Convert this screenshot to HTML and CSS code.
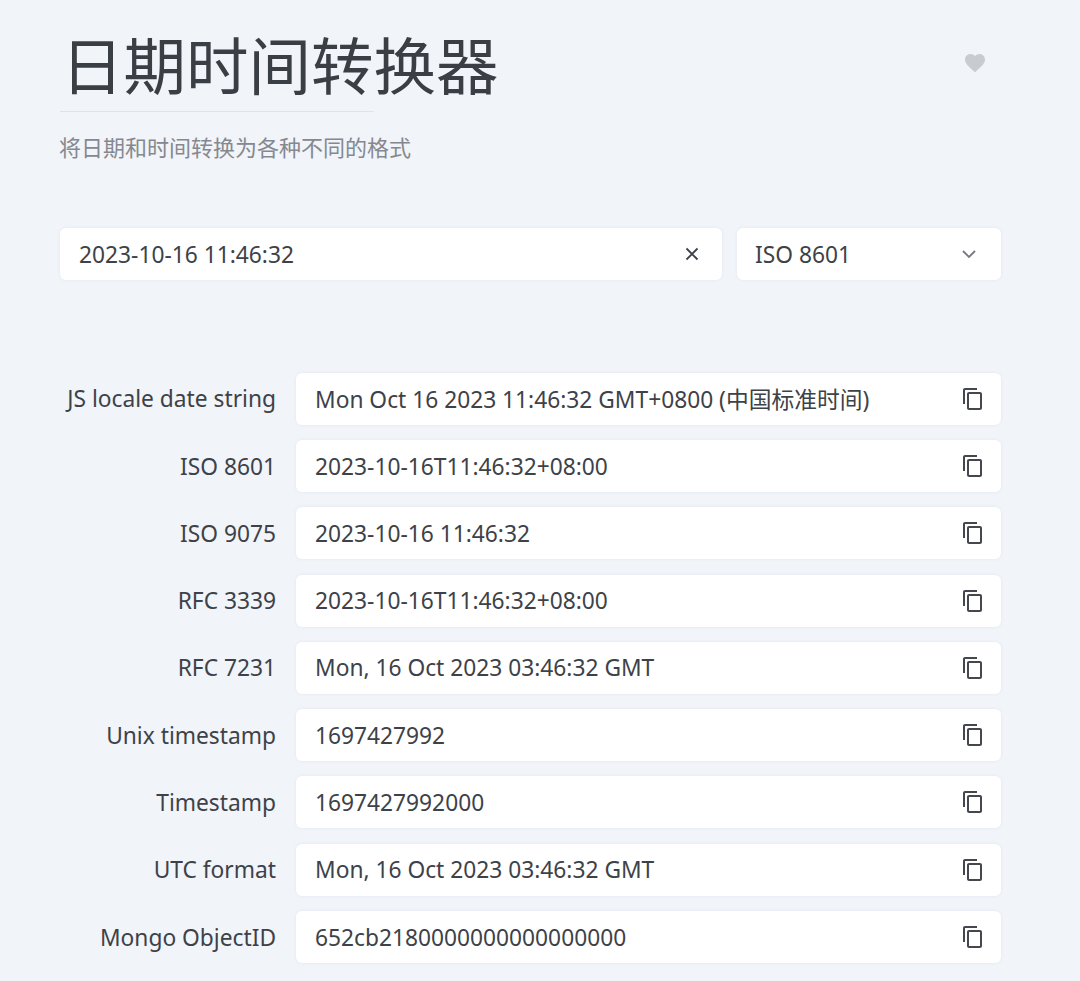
FILE: index.html
```html
<!DOCTYPE html>
<html lang="en">
<head>
    <meta charset="UTF-8">
    <title>日期时间转换器</title>
    <link rel="stylesheet" href="styles.css">
</head>
<body>
<div class="page">
    <div class="head">
        <div class="head-text">
            <h1 class="title">日期时间转换器</h1>
            <div class="separator"></div>
            <div class="desc">将日期和时间转换为各种不同的格式</div>
        </div>
        <svg class="heart" viewBox="0 0 24 24"><path d="M12 21.35l-1.45-1.32C5.4 15.36 2 12.28 2 8.5 2 5.42 4.42 3 7.5 3c1.74 0 3.41.81 4.5 2.09C13.09 3.81 14.76 3 16.5 3 19.58 3 22 5.42 22 8.5c0 3.78-3.4 6.86-8.55 11.54L12 21.35z"/></svg>
    </div>

    <div class="controls">
        <div class="box box-input">
            <span class="value">2023-10-16 11:46:32</span>
            <svg class="icon-close" viewBox="0 0 24 24"><path d="M6 6l12 12M18 6L6 18"/></svg>
        </div>
        <div class="box box-select">
            <span class="value">ISO 8601</span>
            <svg class="icon-chevron" viewBox="0 0 24 24"><path d="M6 9l6 6 6-6"/></svg>
        </div>
    </div>

    <div class="rows">
        <div class="row">
            <label class="label">JS locale date string</label>
            <div class="box box-output"><span class="value">Mon Oct 16 2023 11:46:32 GMT+0800 (中国标准时间)</span><svg class="icon-copy" viewBox="0 0 24 24"><path d="M16 1H4c-1.1 0-2 .9-2 2v14h2V3h12V1zm3 4H8c-1.1 0-2 .9-2 2v14c0 1.1.9 2 2 2h11c1.1 0 2-.9 2-2V7c0-1.1-.9-2-2-2zm0 16H8V7h11v14z"/></svg></div>
        </div>
        <div class="row">
            <label class="label">ISO 8601</label>
            <div class="box box-output"><span class="value">2023-10-16T11:46:32+08:00</span><svg class="icon-copy" viewBox="0 0 24 24"><path d="M16 1H4c-1.1 0-2 .9-2 2v14h2V3h12V1zm3 4H8c-1.1 0-2 .9-2 2v14c0 1.1.9 2 2 2h11c1.1 0 2-.9 2-2V7c0-1.1-.9-2-2-2zm0 16H8V7h11v14z"/></svg></div>
        </div>
        <div class="row">
            <label class="label">ISO 9075</label>
            <div class="box box-output"><span class="value">2023-10-16 11:46:32</span><svg class="icon-copy" viewBox="0 0 24 24"><path d="M16 1H4c-1.1 0-2 .9-2 2v14h2V3h12V1zm3 4H8c-1.1 0-2 .9-2 2v14c0 1.1.9 2 2 2h11c1.1 0 2-.9 2-2V7c0-1.1-.9-2-2-2zm0 16H8V7h11v14z"/></svg></div>
        </div>
        <div class="row">
            <label class="label">RFC 3339</label>
            <div class="box box-output"><span class="value">2023-10-16T11:46:32+08:00</span><svg class="icon-copy" viewBox="0 0 24 24"><path d="M16 1H4c-1.1 0-2 .9-2 2v14h2V3h12V1zm3 4H8c-1.1 0-2 .9-2 2v14c0 1.1.9 2 2 2h11c1.1 0 2-.9 2-2V7c0-1.1-.9-2-2-2zm0 16H8V7h11v14z"/></svg></div>
        </div>
        <div class="row">
            <label class="label">RFC 7231</label>
            <div class="box box-output"><span class="value">Mon, 16 Oct 2023 03:46:32 GMT</span><svg class="icon-copy" viewBox="0 0 24 24"><path d="M16 1H4c-1.1 0-2 .9-2 2v14h2V3h12V1zm3 4H8c-1.1 0-2 .9-2 2v14c0 1.1.9 2 2 2h11c1.1 0 2-.9 2-2V7c0-1.1-.9-2-2-2zm0 16H8V7h11v14z"/></svg></div>
        </div>
        <div class="row">
            <label class="label">Unix timestamp</label>
            <div class="box box-output"><span class="value">1697427992</span><svg class="icon-copy" viewBox="0 0 24 24"><path d="M16 1H4c-1.1 0-2 .9-2 2v14h2V3h12V1zm3 4H8c-1.1 0-2 .9-2 2v14c0 1.1.9 2 2 2h11c1.1 0 2-.9 2-2V7c0-1.1-.9-2-2-2zm0 16H8V7h11v14z"/></svg></div>
        </div>
        <div class="row">
            <label class="label">Timestamp</label>
            <div class="box box-output"><span class="value">1697427992000</span><svg class="icon-copy" viewBox="0 0 24 24"><path d="M16 1H4c-1.1 0-2 .9-2 2v14h2V3h12V1zm3 4H8c-1.1 0-2 .9-2 2v14c0 1.1.9 2 2 2h11c1.1 0 2-.9 2-2V7c0-1.1-.9-2-2-2zm0 16H8V7h11v14z"/></svg></div>
        </div>
        <div class="row">
            <label class="label">UTC format</label>
            <div class="box box-output"><span class="value">Mon, 16 Oct 2023 03:46:32 GMT</span><svg class="icon-copy" viewBox="0 0 24 24"><path d="M16 1H4c-1.1 0-2 .9-2 2v14h2V3h12V1zm3 4H8c-1.1 0-2 .9-2 2v14c0 1.1.9 2 2 2h11c1.1 0 2-.9 2-2V7c0-1.1-.9-2-2-2zm0 16H8V7h11v14z"/></svg></div>
        </div>
        <div class="row">
            <label class="label">Mongo ObjectID</label>
            <div class="box box-output"><span class="value">652cb2180000000000000000</span><svg class="icon-copy" viewBox="0 0 24 24"><path d="M16 1H4c-1.1 0-2 .9-2 2v14h2V3h12V1zm3 4H8c-1.1 0-2 .9-2 2v14c0 1.1.9 2 2 2h11c1.1 0 2-.9 2-2V7c0-1.1-.9-2-2-2zm0 16H8V7h11v14z"/></svg></div>
        </div>
    </div>
</div>
</body>
</html>
```

FILE: styles.css
```css
html, body{
    margin: 0;
    height: 100%;
    overflow: hidden;
}
body{
    background: #f1f4f9;
    color: #3d4248;
    font-family: "Noto Sans", "Noto Sans CJK SC", sans-serif;
    font-size: 22.75px;
}
.page{
    padding: 0 79px 0 60px;
}
.head{
    display: flex;
    justify-content: space-between;
}
.title{
    margin: 0;
    padding: 23px 0 0 1px;
    height: 88px;
    font-family: "Noto Sans CJK SC", sans-serif;
    font-size: 62.5px;
    line-height: 80px;
    font-weight: 400;
    color: #3a3f45;
}
.separator{
    width: 314px;
    height: 1px;
    background: #dfe3ea;
}
.desc{
    margin: 17px 0 0 -1px;
    font-family: "Noto Sans CJK SC", sans-serif;
    font-size: 22px;
    line-height: 34px;
    color: #85898f;
}
.heart{
    width: 24px;
    height: 24px;
    margin: 51px 14px 0 0;
    fill: #c9cbd0;
}
.controls{
    display: flex;
    gap: 15px;
    margin-top: 65px;
}
.box{
    display: flex;
    align-items: center;
    justify-content: space-between;
    height: 52px;
    box-sizing: border-box;
    background: #fff;
    border-radius: 6px;
    box-shadow: 0 0 3px rgba(200, 208, 220, .35);
}
.box-input{
    flex: 1;
    padding: 0 19px 0 19px;
}
.box-select{
    width: 264px;
    padding: 0 20px 0 18px;
}
.icon-close{
    width: 22px;
    height: 22px;
    fill: none;
    stroke: #3d4248;
    stroke-width: 2;
}
.icon-chevron{
    width: 24px;
    height: 24px;
    fill: none;
    stroke: #74787e;
    stroke-width: 1.8;
}
.rows{
    margin-top: 92.9px;
    display: flex;
    flex-direction: column;
    gap: 15.28px;
}
.row{
    display: flex;
    align-items: center;
    gap: 20px;
}
.label{
    width: 216px;
    text-align: right;
}
.box-output{
    flex: 1;
    padding: 0 16px 0 19px;
}
.icon-copy{
    width: 24px;
    height: 24px;
    fill: #44484e;
}
```
